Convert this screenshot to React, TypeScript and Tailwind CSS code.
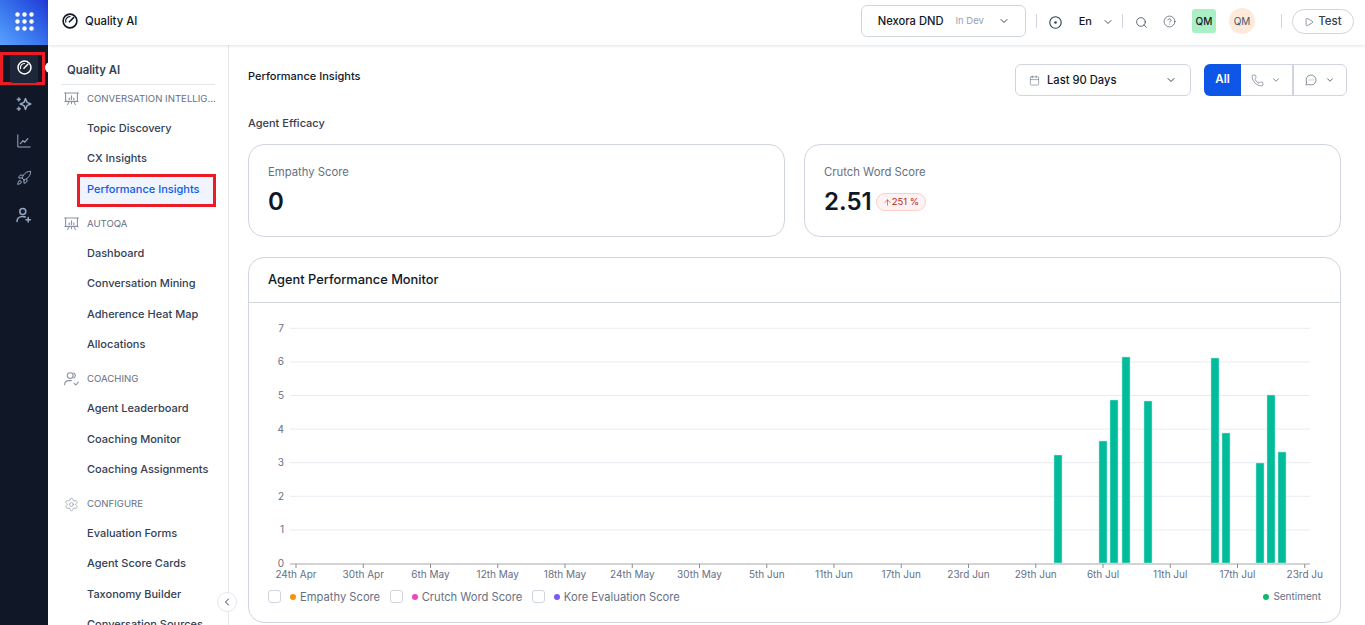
import React from "react";
import {
  Rocket, Settings, ChevronDown, ChevronLeft, Search, CircleHelp, Play, Calendar, Phone, MessageCircleMore, ArrowUp,
} from "lucide-react";

function GaugeIcon({ size = 16, color = "currentColor" }: { size?: number; color?: string }) {
  return (
    <svg width={size} height={size} viewBox="0 0 16 16" fill="none" stroke={color}>
      <circle cx="8" cy="8" r="6.9" strokeWidth="1.6" />
      <path d="M3.8 9.2A4.3 4.3 0 0 1 8 3.7" strokeWidth="1.2" strokeLinecap="round" />
      <path d="M7.4 8.8 11.6 4.6" strokeWidth="1.6" strokeLinecap="round" />
    </svg>
  );
}

function Dots() {
  const cs = [0, 1, 2];
  return (
    <svg width="19" height="19" viewBox="0 0 19 19" fill="#fff">
      {cs.map((r) => cs.map((c) => <circle key={`${r}${c}`} cx={2.5 + c * 7} cy={2.5 + r * 7} r="2.2" />))}
    </svg>
  );
}

function SparkIcon() {
  return (
    <svg width="16" height="16" viewBox="0 0 16 16" fill="none" stroke="currentColor" strokeWidth="1.5" strokeLinejoin="round">
      <path d="M9.5 2.6 11 6.4 14.8 8 11 9.6 9.5 13.4 8 9.6 4.2 8 8 6.4Z" />
      <path d="M2.8 1.2 3.5 2.8 5 3.4 3.5 4 2.8 5.6 2.1 4 .6 3.4 2.1 2.8Z" fill="currentColor" strokeWidth=".6" />
      <path d="M2.8 10.6 3.5 12.2 5 12.8 3.5 13.4 2.8 15 2.1 13.4.6 12.8 2.1 12.2Z" fill="currentColor" strokeWidth=".6" />
    </svg>
  );
}

function ChartIcon() {
  return (
    <svg width="14" height="14" viewBox="0 0 14 14" fill="none" stroke="currentColor" strokeLinecap="round" strokeLinejoin="round">
      <path d="M.8.8v12.2h12.4" strokeWidth="1" />
      <path d="M3.4 9.6 6 6.6 7.8 8.2 10.8 4.6" strokeWidth="1.2" />
    </svg>
  );
}

function UserAddIcon() {
  return (
    <svg width="16" height="16" viewBox="0 0 16 16" fill="none" stroke="currentColor" strokeWidth="1.5" strokeLinecap="round">
      <circle cx="6.8" cy="4.4" r="3" />
      <path d="M1 14.4c0-3 2.4-5 5.6-5 1 0 1.9.2 2.7.6" />
      <path d="M12.2 10.6v4.4M10 12.8h4.4" />
    </svg>
  );
}

function BoardIcon() {
  return (
    <svg width="15" height="14" viewBox="0 0 15 14" fill="none" stroke="currentColor" strokeLinecap="round">
      <path d="M.6 1h13.8" strokeWidth="1.2" />
      <path d="M1.6 1v8.4h11.8V1" strokeWidth="1.1" />
      <path d="M5.2 7.4V6M7.5 7.4V3.8M9.8 7.4V6.2" strokeWidth="1.2" />
      <path d="M.8 9.6h13.4M5 9.8l-1.4 3M10 9.8l1.4 3M7.5 9.8v2" strokeWidth="1" />
    </svg>
  );
}

function CoachIcon() {
  return (
    <svg width="15" height="14" viewBox="0 0 15 14" fill="none" stroke="currentColor" strokeWidth="1.1" strokeLinecap="round" strokeLinejoin="round">
      <circle cx="6.2" cy="3.6" r="2.9" />
      <path d="M9.8.9a3 3 0 0 1 0 5.2" />
      <path d="M.6 12.8c0-2.6 2-4.2 4.4-4.2h2.4" />
      <path d="M10.2 11.4l1.6 1.6 2.6-2.8" />
    </svg>
  );
}

function Section({ icon, title, items, first }: { icon: React.ReactNode; title: string; items: string[]; first?: boolean }) {
  return (
    <div className={first ? "-mt-px" : "mt-[4.7px]"}>
      <div className="flex h-[29.3px] items-center pt-[1.5px]">
        <span className="flex w-[26px] shrink-0 justify-start pl-[3px] text-[#8a93a3]">{icon}</span>
        <span className="whitespace-nowrap text-[9.6px] text-[#667085]">{title}</span>
      </div>
      {items.map((t) => {
        const active = t === "Performance Insights";
        return (
          <div key={t} className={`relative flex h-[30.3px] items-center pl-[26px] text-[11px] font-medium ${active ? "text-[#0d5ae5]" : "text-[#344054]"}`}>
            {active && <div className="absolute top-0 left-[16px] -right-[1px] h-[33px] border-[3px] border-[#ed1c24] bg-[#eff4ff]" />}
            <span className="relative whitespace-nowrap">{t}</span>
          </div>
        );
      })}
    </div>
  );
}

const yTicks = [0, 1, 2, 3, 4, 5, 6, 7];
const xLabels = ["24th Apr", "30th Apr", "6th May", "12th May", "18th May", "24th May", "30th May", "5th Jun", "11th Jun", "17th Jun", "23rd Jun", "29th Jun", "6th Jul", "11th Jul", "17th Jul", "23rd Ju"];
const bars = [
  [1054, 455], [1099, 441], [1110, 400], [1122, 357], [1144, 401], [1211, 358], [1222, 433], [1256, 463], [1267, 395], [1278, 452],
];

function Chart() {
  return (
    <svg viewBox="249 303 1091 282" width="1091" height="282" className="block" style={{ fontFamily: "Inter, sans-serif" }}>
      {yTicks.map((v) => {
        const y = 563.5 - v * 33.6;
        return (
          <g key={v}>
            {v > 0 && <line x1="290" x2="1310" y1={y} y2={y} stroke="#e8ebf2" strokeWidth="1" />}
            <text x="284" y={y + 3.5} textAnchor="end" fontSize="10" fill="#667085">{v}</text>
          </g>
        );
      })}
      {bars.map(([x, top]) => (
        <rect key={x} x={x} y={top} width="8" height={563 - top} fill="#00bc9b" stroke="#b5ece0" strokeWidth="0.5" />
      ))}
      <line x1="290" x2="1310" y1="564" y2="564" stroke="#c4c4c8" strokeWidth="1.5" />
      {xLabels.map((l, i) => {
        const x = 296 + i * 67.25;
        return (
          <g key={l}>
            <line x1={x} x2={x} y1="564" y2="568" stroke="#8c8c90" strokeWidth="1" />
            <text x={x} y="578" textAnchor="middle" fontSize="10" fill="#667085">{l}</text>
          </g>
        );
      })}
    </svg>
  );
}

function LegendItem({ color, label }: { color: string; label: string }) {
  return (
    <div className="flex items-center">
      <span className="mr-[9px] h-[13px] w-[13px] rounded-[3px] border border-[#d0d5dd]" />
      <span className="mr-[4px] h-[6px] w-[6px] rounded-full" style={{ background: color }} />
      <span className="text-[11.2px] text-[#667085]">{label}</span>
    </div>
  );
}

export default function App() {
  return (
    <div className="flex h-screen w-full overflow-hidden bg-white" style={{ fontFamily: "Inter, 'Noto Sans', sans-serif" }}>
      {/* Rail */}
      <aside className="relative flex w-12 shrink-0 flex-col items-center bg-[#101828]">
        <div className="flex h-[45px] w-full items-center justify-center bg-gradient-to-tr from-[#5aa2ff] to-[#2336d6] pb-[3px]">
          <Dots />
        </div>
        <div className="mt-[7px] flex h-[33px] w-[45px] items-center justify-center self-start border-[3px] border-[#ed1c24] pl-[3px]">
          <div className="flex h-[28px] w-[28px] items-center justify-center rounded-[3px] bg-[#1d2739] pb-[2px] text-white">
            <GaugeIcon size={15} />
          </div>
        </div>
        <div className="absolute left-[45px] top-[62px] h-[11px] w-[11px] rounded-full bg-white" />
        <div className="mt-[11px] flex flex-col items-center gap-[22px] text-[#98a8c0]">
          <SparkIcon />
          <ChartIcon />
          <Rocket size={16} strokeWidth={1.5} />
          <span className="-mt-px"><UserAddIcon /></span>
        </div>
      </aside>

      <div className="flex min-w-0 flex-1 flex-col">
        {/* Header */}
        <header className="relative z-10 flex h-[45px] shrink-0 items-center bg-white pb-[3px] pl-[14px] pr-[11px] shadow-[0_1px_3px_rgba(16,24,40,0.12)]">
          <span className="text-[#101828]"><GaugeIcon size={16} /></span>
          <span className="ml-[7px] text-[11.3px] font-medium text-[#101828]">Quality AI</span>
          <div className="ml-auto flex items-center">
            <div className="flex h-[32px] w-[165px] items-center rounded-[6px] border border-[#d0d5dd] pl-[16px] pr-[15px]">
              <span className="text-[11.2px] font-medium text-[#101828]">Nexora DND</span>
              <span className="ml-[12px] text-[9.5px] text-[#98a2b3]">In Dev</span>
              <ChevronDown size={12} className="ml-auto text-[#344054]" />
            </div>
            <span className="ml-[10px] h-[14px] w-px bg-[#d0d5dd]" />
            <svg width="13" height="13" viewBox="0 0 13 13" fill="none" stroke="#344054" className="ml-[12px] mt-[2px]">
              <circle cx="6.5" cy="6.5" r="5.7" strokeWidth="1.1" />
              <circle cx="6.5" cy="6.5" r="1.3" fill="#344054" stroke="none" />
            </svg>
            <span className="ml-[17px] text-[11px] font-medium text-[#101828]">En</span>
            <ChevronDown size={12} className="ml-[10px] mt-[2px] text-[#475467]" />
            <span className="ml-[8px] h-[14px] w-px bg-[#d0d5dd]" />
            <Search size={13} strokeWidth={1.4} className="ml-[12px] mt-[2px] text-[#344054]" />
            <CircleHelp size={13} strokeWidth={1.3} className="ml-[15px] text-[#475467]" />
            <span className="ml-[16px] flex h-[24px] w-[24px] items-center justify-center rounded-[3px] bg-[#abefc6] text-[10px] font-medium text-[#101828]">QM</span>
            <span className="ml-[13px] flex h-[26px] w-[26px] items-center justify-center rounded-full bg-[#fdeadb] text-[10px] font-normal text-[#475467]">QM</span>
            <span className="ml-[26px] h-[14px] w-px bg-[#d0d5dd]" />
            <div className="ml-[10px] mt-[1px] flex h-[25px] w-[62px] items-center justify-center gap-[4px] rounded-full border border-[#d0d5dd]">
              <Play size={10} strokeWidth={1.3} className="text-[#344054]" />
              <span className="text-[11.5px] font-medium text-[#344054]">Test</span>
            </div>
          </div>
        </header>

        <div className="flex min-h-0 flex-1">
          {/* Sidebar */}
          <nav className="relative w-[181px] shrink-0 border-r border-[#e4e7ec] pl-[13px] pr-[13px]">
            <div className="flex h-[40px] items-end border-b border-[#e4e7ec] pb-[5px] pl-[6px] text-[11.3px] font-semibold text-[#344054]">Quality AI</div>
            <Section first icon={<BoardIcon />} title="CONVERSATION INTELLIG..." items={["Topic Discovery", "CX Insights", "Performance Insights"]} />
            <Section icon={<BoardIcon />} title="AUTOQA" items={["Dashboard", "Conversation Mining", "Adherence Heat Map", "Allocations"]} />
            <Section icon={<CoachIcon />} title="COACHING" items={["Agent Leaderboard", "Coaching Monitor", "Coaching Assignments"]} />
            <Section icon={<Settings size={15} strokeWidth={1.1} />} title="CONFIGURE" items={["Evaluation Forms", "Agent Score Cards", "Taxonomy Builder", "Conversation Sources"]} />
            <button className="absolute -right-[9px] top-[547px] flex h-[20px] w-[20px] items-center justify-center rounded-full border border-[#e4e7ec] bg-white text-[#344054]">
              <ChevronLeft size={12} />
            </button>
          </nav>

          {/* Main */}
          <main className="min-w-0 flex-1 pl-[19px] pr-[24px]">
            <div className="-mr-[6px] flex h-[51px] items-end justify-between">
              <span className="self-start pt-[23px] text-[11px] font-medium text-[#101828]">Performance Insights</span>
              <div className="flex items-center gap-[13px]">
                <div className="flex h-[32px] w-[176px] items-center rounded-[6px] border border-[#d0d5dd] pl-[13px] pr-[13px]">
                  <Calendar size={11} strokeWidth={1.3} className="text-[#667085]" />
                  <span className="ml-[7px] text-[11.2px] font-medium text-[#101828]">Last 90 Days</span>
                  <ChevronDown size={12} className="ml-auto text-[#344054]" />
                </div>
                <div className="flex h-[32px] w-[143px] rounded-[6px] border border-[#d0d5dd]">
                  <div className="-m-px flex w-[37px] items-center justify-center rounded-l-[6px] bg-[#0d56e8] text-[11.5px] font-semibold text-white">All</div>
                  <div className="flex w-[54px] items-center justify-center gap-[7px] border-r-2 border-[#d0d5dd] text-[#667085]">
                    <Phone size={13} strokeWidth={1.2} />
                    <ChevronDown size={10} />
                  </div>
                  <div className="flex flex-1 items-center justify-center gap-[8px] text-[#475467]">
                    <MessageCircleMore size={12} strokeWidth={1.3} />
                    <ChevronDown size={10} />
                  </div>
                </div>
              </div>
            </div>

            <div className="mt-[19px] text-[11px] font-medium text-[#344054]">Agent Efficacy</div>

            <div className="mt-[12px] grid grid-cols-2 gap-[19px]">
              <div className="flex h-[93px] flex-col rounded-[16px] border border-[#d0d5dd] pl-[19px] pt-[19px]">
                <span className="text-[11.3px] text-[#667085]">Empathy Score</span>
                <span className="mt-[7px] text-[24px] font-semibold leading-[30px] text-[#101828]">0</span>
              </div>
              <div className="flex h-[93px] flex-col rounded-[16px] border border-[#d0d5dd] pl-[19px] pt-[19px]">
                <span className="text-[11.3px] text-[#667085]">Crutch Word Score</span>
                <div className="mt-[7px] flex items-center">
                  <span className="text-[24px] font-semibold leading-[30px] text-[#101828]">2.51</span>
                  <span className="ml-[4px] flex h-[18px] items-center rounded-full border border-[#fecdca] bg-[#fef3f2] px-[6px] text-[9.5px] text-[#b42318]">
                    <ArrowUp size={9} strokeWidth={1.5} />251 %
                  </span>
                </div>
              </div>
            </div>

            <div className="mt-[20px] h-[366px] rounded-[16px] border border-[#d0d5dd]">
              <div className="flex h-[45px] items-center border-b border-[#d0d5dd] pl-[19px] text-[12.85px] font-medium text-[#101828]">Agent Performance Monitor</div>
              <Chart />
              <div className="flex items-center justify-between pl-[19px] pr-[19px] pt-[4px]">
                <div className="flex items-center gap-[9.5px]">
                  <LegendItem color="#f79009" label="Empathy Score" />
                  <LegendItem color="#ee46bc" label="Crutch Word Score" />
                  <LegendItem color="#7a5af8" label="Kore Evaluation Score" />
                </div>
                <div className="flex items-center gap-[4px]">
                  <span className="h-[6px] w-[6px] rounded-full bg-[#12b76a]" />
                  <span className="text-[10px] text-[#667085]">Sentiment</span>
                </div>
              </div>
            </div>
          </main>
        </div>
      </div>
    </div>
  );
}
